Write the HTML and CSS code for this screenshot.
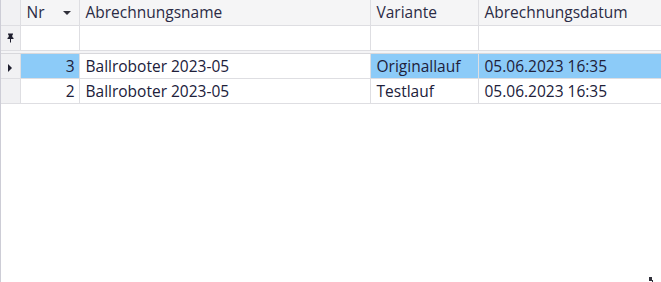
FILE: index.html
```html
<!DOCTYPE html>
<html lang="de">
<head>
    <meta charset="UTF-8">
    <title>Abrechnungen</title>
    <link rel="stylesheet" href="styles.css">
</head>
<body>

    <div class="grid">
        <table class="grid-table">
            <colgroup>
                <col class="c-ind">
                <col class="c-nr">
                <col class="c-name">
                <col class="c-var">
                <col class="c-date">
            </colgroup>
            <thead>
                <tr class="head-row">
                    <th class="ind"></th>
                    <th class="sorted">Nr<span class="sort-arrow"></span></th>
                    <th>Abrechnungsname</th>
                    <th>Variante</th>
                    <th>Abrechnungsdatum</th>
                </tr>
            </thead>
            <tbody>
                <!-- Filterzeile -->
                <tr class="filter-row">
                    <td class="ind">
                        <svg width="7" height="10" viewBox="0 0 7 10">
                            <path d="M1 0.5 h5 v1 l-0.7 0.5 v2 l1.2 1 v1 h-6 v-1 l1.2 -1 v-2 l-0.7 -0.5 z" fill="#1f1f2e"/>
                            <rect x="3" y="6" width="1" height="3.5" fill="#1f1f2e"/>
                        </svg>
                    </td>
                    <td></td>
                    <td></td>
                    <td></td>
                    <td></td>
                </tr>
                <tr class="sep-row"><td colspan="5"></td></tr>
                <tr class="data-row current">
                    <td class="ind"><span class="row-arrow"></span></td>
                    <td class="num sel">3</td>
                    <td>Ballroboter 2023-05</td>
                    <td class="sel">Originallauf</td>
                    <td class="sel">05.06.2023 16:35</td>
                </tr>
                <tr class="data-row">
                    <td class="ind"></td>
                    <td class="num">2</td>
                    <td>Ballroboter 2023-05</td>
                    <td>Testlauf</td>
                    <td>05.06.2023 16:35</td>
                </tr>
            </tbody>
        </table>
        <span class="corner-mark"></span>
    </div>

</body>
</html>
```

FILE: styles.css
```css
html, body {
    margin: 0;
    padding: 0;
    background: #ffffff;
}
.grid {
    position: relative;
    width: 661px;
    height: 282px;
    box-sizing: border-box;
    border-left: 1px solid #cdcdd6;
    font-family: "Open Sans", sans-serif;
    font-size: 15.5px;
    color: #20203a;
}
.grid-table {
    border-collapse: collapse;
    table-layout: fixed;
    width: 660px;
}
.c-ind { width: 19px; }
.c-nr { width: 59px; }
.c-name { width: 291px; }
.c-var { width: 108px; }
.c-date { width: 183px; }

th, td {
    border: 1px solid #dedee2;
    padding: 0 6px;
    line-height: 18px;
    text-align: left;
    white-space: nowrap;
    overflow: hidden;
}
th {
    background: #f5f5f6;
    font-weight: normal;
    color: #2b2b45;
    border-top: none;
}
.head-row {
    height: 25px;
}
.head-row th:first-child,
td.ind {
    border-left: none;
    padding: 0;
    background: #f1f1f3;
    text-align: center;
}
.sorted {
    position: relative;
}
.sort-arrow {
    position: absolute;
    right: 8px;
    top: 11px;
    border-left: 4px solid transparent;
    border-right: 4px solid transparent;
    border-top: 4px solid #30303a;
}
.filter-row {
    height: 25px;
}
.filter-row svg {
    display: block;
    margin: 1px auto 0;
}
.sep-row {
    height: 3px;
}
.sep-row td {
    padding: 0;
    line-height: 0;
    border-left: none;
    background: #f4f4f6;
    border-top: 1px solid #d8d8dc;
    border-bottom: 1px solid #d8d8dc;
}
.data-row {
    height: 25px;
}
td.num {
    text-align: right;
    padding-right: 4px;
}
td.sel {
    background: #8ccbf8;
}
.row-arrow {
    display: inline-block;
    border-top: 4px solid transparent;
    border-bottom: 4px solid transparent;
    border-left: 4px solid #1f1f2e;
    margin-top: 2px;
}
.corner-mark {
    position: absolute;
    left: 648px;
    top: 277px;
    width: 3px;
    height: 4px;
    background: #30303a;
    box-shadow: 2px 2px 0 -1px #30303a;
}
```
